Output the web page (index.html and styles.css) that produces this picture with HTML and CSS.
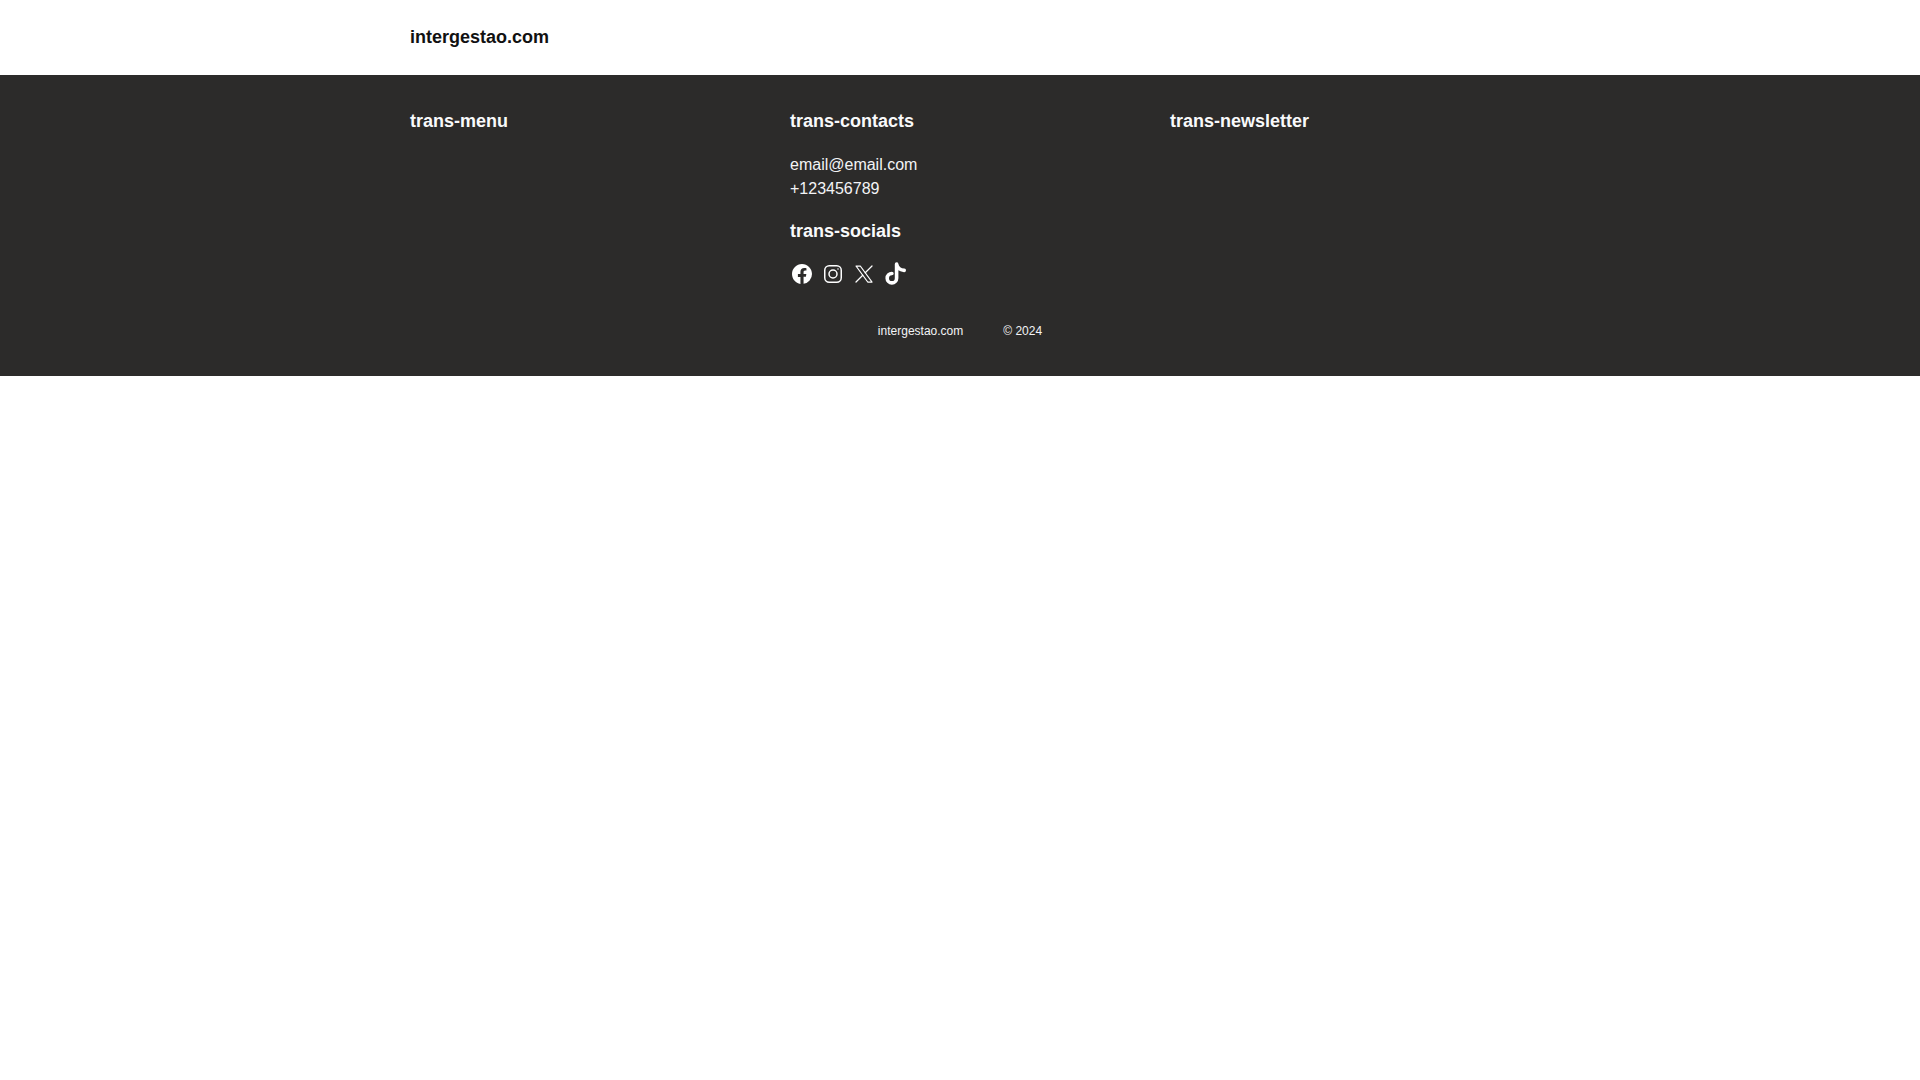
FILE: index.html
```html
<!DOCTYPE html>
<html lang="en">
<head>
<meta charset="utf-8">
<title>intergestao.com</title>
<link rel="stylesheet" href="styles.css">
</head>
<body>
<header class="site-header">
  <div class="container"><a class="brand">intergestao.com</a></div>
</header>
<footer class="site-footer">
  <div class="container columns">
    <section class="column"><h2 class="title">trans-menu</h2></section>
    <section class="column">
      <h2 class="title">trans-contacts</h2>
      <p class="contact">email@email.com</p>
      <p class="contact">+123456789</p>
      <h2 class="title title-socials">trans-socials</h2>
      <div class="socials">
        <svg class="icon" viewBox="0 0 24 24" fill="currentColor"><path d="M12 2.04c-5.5 0-10 4.49-10 10.02c0 5 3.66 9.15 8.44 9.9v-7H7.9v-2.9h2.54V9.85c0-2.51 1.49-3.89 3.78-3.89c1.09 0 2.23.19 2.23.19v2.47h-1.26c-1.24 0-1.63.77-1.63 1.53v1.81h2.78l-.45 2.9h-2.33v7a10 10 0 0 0 8.44-9.9c0-5.53-4.5-10.02-10-10.02"/></svg>
        <svg class="icon" viewBox="0 0 24 24" fill="none" stroke="currentColor" stroke-width="1.5" stroke-linecap="round" stroke-linejoin="round"><rect x="3.75" y="3.75" width="16.5" height="16.5" rx="4.5"/><circle cx="12" cy="12" r="4"/><path d="M17 7v.01"/></svg>
        <svg class="icon" viewBox="0 0 24 24" fill="none" stroke="currentColor" stroke-width="1.25" stroke-linecap="round" stroke-linejoin="round"><path d="M4 4l11.733 16h4.267l-11.733-16z"/><path d="M4 20l6.768-6.768"/><path d="M13.228 10.772l6.772-6.772"/></svg>
        <svg class="icon" viewBox="0 0 24 24" fill="none" stroke="currentColor" stroke-width="3.6" stroke-linecap="round" stroke-linejoin="round"><path d="M7.9 11.5A4.7 4.7 0 1 0 12.6 16.2V2C13.2 5.2 16 8 20.2 8.4"/></svg>
      </div>
    </section>
    <section class="column"><h2 class="title">trans-newsletter</h2></section>
  </div>
  <div class="legal">
    <span>intergestao.com</span>
    <span>© 2024</span>
  </div>
</footer>
</body>
</html>
```

FILE: styles.css
```css
* { box-sizing: border-box; }

html, body { margin: 0; padding: 0; }

body {
  background: #fff;
  font-family: "Liberation Sans", Arial, sans-serif;
  font-size: 16px;
  line-height: 24px;
}

.container {
  width: 1140px;
  margin: 0 auto;
}

.site-header {
  height: 75px;
  display: flex;
  align-items: center;
}

.site-header .container { padding: 0 20px; }

.brand {
  color: #111;
  font-size: 18px;
  font-weight: 700;
  line-height: 27px;
}

.site-footer {
  height: 301px;
  padding-top: 33px;
  background: #2c2b2a;
  color: #f3f4f6;
}

.columns {
  display: grid;
  grid-template-columns: repeat(3, 380px);
}

.column { padding: 0 20px; }

.title {
  margin: 0 0 18px;
  color: #f9fafb;
  font-size: 18px;
  font-weight: 700;
  line-height: 27px;
}

.title-socials {
  margin-top: 17px;
  margin-bottom: 17px;
}

.contact { margin: 0; }

.socials {
  display: flex;
  gap: 7.2px;
  color: #fff;
}

.icon {
  display: block;
  width: 24px;
  height: 24px;
}

.legal {
  display: flex;
  justify-content: center;
  gap: 40px;
  margin-top: 36px;
  font-size: 12px;
  line-height: 18px;
}
```
